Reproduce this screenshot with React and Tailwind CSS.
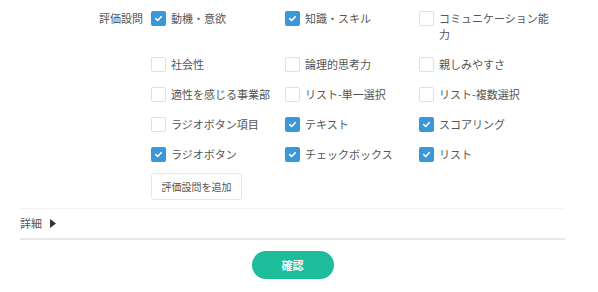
import React, { useState } from 'react';

const ITEMS = [
  { label: '動機・意欲', checked: true },
  { label: '知識・スキル', checked: true },
  { label: 'コミュニケーション能力', checked: false },
  { label: '社会性', checked: false },
  { label: '論理的思考力', checked: false },
  { label: '親しみやすさ', checked: false },
  { label: '適性を感じる事業部', checked: false },
  { label: 'リスト-単一選択', checked: false },
  { label: 'リスト-複数選択', checked: false },
  { label: 'ラジオボタン項目', checked: false },
  { label: 'テキスト', checked: true },
  { label: 'スコアリング', checked: true },
  { label: 'ラジオボタン', checked: true },
  { label: 'チェックボックス', checked: true },
  { label: 'リスト', checked: true },
];

function Check({ checked, label, onToggle }) {
  return (
    <label className="flex items-start gap-[5px] cursor-pointer" onClick={onToggle}>
      <span
        className={
          checked
            ? 'mt-px flex h-[15px] w-[15px] shrink-0 items-center justify-center rounded-[2px] bg-[#3a97da]'
            : 'mt-px h-[15px] w-[15px] shrink-0 rounded-[2px] border border-[#e0e0e0] bg-white'
        }
      >
        {checked && (
          <svg width="9" height="9" viewBox="0 0 10 10">
            <path d="M2 5.2 L4.1 7.2 L8 3" fill="none" stroke="#fff" strokeWidth="1.8" strokeLinecap="round" strokeLinejoin="round" />
          </svg>
        )}
      </span>
      <span className="leading-4">{label}</span>
    </label>
  );
}

export default function App() {
  const [items, setItems] = useState(ITEMS);

  const toggle = (i) => {
    setItems(items.map((it, j) => (j === i ? { ...it, checked: !it.checked } : it)));
  };

  return (
    <div className="h-[292px] w-[598px] bg-white font-['Noto_Sans_CJK_JP','Noto_Sans',sans-serif] text-[11px] text-[#555]">
      <div className="w-[565px] pl-5 pt-[10px]">
        <div className="flex">
          <div className="w-[131px] pr-2 text-right leading-4">評価設問</div>
          <div>
            <div className="grid grid-cols-[134px_134px_134px] gap-y-[14px]">
              {items.map((it, i) => (
                <Check key={it.label} label={it.label} checked={it.checked} onToggle={() => toggle(i)} />
              ))}
            </div>
            <button className="mt-[11px] h-[27px] w-[91px] rounded-[3px] border border-[#e6e6e6] bg-white text-[10px] text-[#555]">
              評価設問を追加
            </button>
          </div>
        </div>
        <div className="mt-2 h-px bg-[#f4f4f4]" />
        <div className="flex h-[29px] items-center gap-[8px]">
          <span>詳細</span>
          <svg width="6" height="9" viewBox="0 0 6 9">
            <path d="M0 0 L6 4.5 L0 9 Z" fill="#333" />
          </svg>
        </div>
        <div className="h-[2px] bg-[#e8e8e8]" />
        <div className="mt-[11px] flex justify-center">
          <button className="h-[28px] w-[82px] rounded-full bg-[#1dbd9b] text-[11px] font-bold text-white">
            確認
          </button>
        </div>
      </div>
    </div>
  );
}
